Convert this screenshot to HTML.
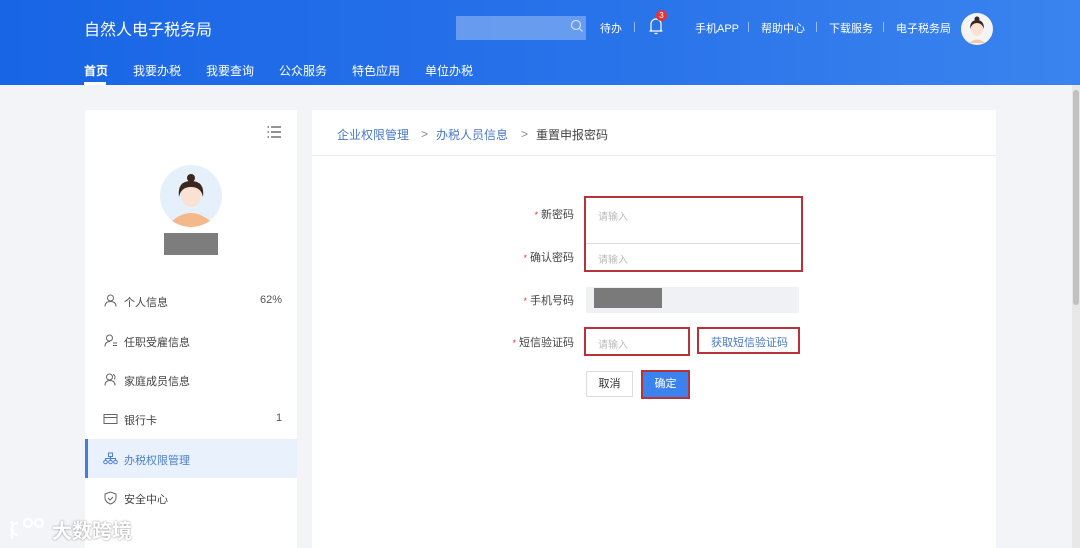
<!DOCTYPE html>
<html><head><meta charset="utf-8"><style>
*{margin:0;padding:0;box-sizing:border-box}
body{width:1080px;height:548px;overflow:hidden;background:#f2f4f7;font-family:"Liberation Sans","Noto Sans CJK SC",sans-serif;position:relative;color:#333}
.hd{position:absolute;left:0;top:0;width:1080px;height:85px;background:linear-gradient(90deg,#1865e6,#2a74ea 60%,#3a84ef)}
.t{position:absolute;color:#fff;white-space:nowrap}
.card{position:absolute;background:#fff}
.abs{position:absolute;white-space:nowrap}
.mi{position:absolute;left:104px;font-size:11px;color:#444;white-space:nowrap}
.lbl{position:absolute;font-size:11px;color:#444;text-align:right;width:80px;white-space:nowrap}
.lbl b{color:#e33;font-weight:normal;font-size:9px;margin-right:3px}
.ph{position:absolute;font-size:10px;color:#bbb}
.red{position:absolute;border:2px solid #b8323a}
</style></head><body>
<div class="hd"></div>
<div class="t" style="left:84px;top:16px;font-size:16px">自然人电子税务局</div>
<div class="t" style="left:84px;top:62px;font-size:12px;font-weight:bold">首页</div>
<div style="position:absolute;left:84px;top:82px;width:22px;height:3px;background:#fff"></div>
<div class="t" style="left:133px;top:62px;font-size:12px">我要办税</div>
<div class="t" style="left:206px;top:62px;font-size:12px">我要查询</div>
<div class="t" style="left:279px;top:62px;font-size:12px">公众服务</div>
<div class="t" style="left:352px;top:62px;font-size:12px">特色应用</div>
<div class="t" style="left:425px;top:62px;font-size:12px">单位办税</div>
<div style="position:absolute;left:456px;top:16px;width:130px;height:24px;background:rgba(255,255,255,.3)"></div>
<svg style="position:absolute;left:570px;top:19px" width="14" height="14"><circle cx="6" cy="6" r="4.5" fill="none" stroke="#cfe0ff" stroke-width="1.2"/><path d="M9.5 9.5L12.5 12.5" stroke="#cfe0ff" stroke-width="1.2"/></svg>
<div class="t" style="left:600px;top:20px;font-size:11px">待办</div>
<div style="position:absolute;left:634px;top:22px;width:1px;height:10px;background:rgba(255,255,255,.5)"></div>
<svg style="position:absolute;left:648px;top:16px" width="18" height="20"><path d="M3 15V8a5 5 0 0110 0v7M1.5 15h13M6.5 17.5h3" fill="none" stroke="#fff" stroke-width="1.2"/></svg>
<div style="position:absolute;left:656px;top:10px;width:11px;height:11px;border-radius:50%;background:#e0343b;color:#fff;font-size:8px;text-align:center;line-height:11px">3</div>
<div class="t" style="left:695px;top:20px;font-size:11px">手机APP</div>
<div style="position:absolute;left:748px;top:22px;width:1px;height:10px;background:rgba(255,255,255,.5)"></div>
<div class="t" style="left:761px;top:20px;font-size:11px">帮助中心</div>
<div style="position:absolute;left:816px;top:22px;width:1px;height:10px;background:rgba(255,255,255,.5)"></div>
<div class="t" style="left:829px;top:20px;font-size:11px">下载服务</div>
<div style="position:absolute;left:883px;top:22px;width:1px;height:10px;background:rgba(255,255,255,.5)"></div>
<div class="t" style="left:896px;top:20px;font-size:11px">电子税务局</div>
<svg style="position:absolute;left:961px;top:13px" width="32" height="32"><circle cx="16" cy="16" r="16" fill="#f4f4f4"/><path d="M8 30q8-7 16 0" fill="#f4c8a8"/><ellipse cx="16" cy="16" rx="6" ry="7" fill="#fbe2d2"/><path d="M9 16q0-9 7-9q7 0 7 9q-2-6-7-6q-5 0-7 6z" fill="#3a2520"/><circle cx="16" cy="6" r="2.5" fill="#3a2520"/></svg>

<div class="card" style="left:85px;top:110px;width:212px;height:438px"></div>
<svg style="position:absolute;left:266px;top:125px" width="16" height="14"><g stroke="#555" stroke-width="1.2"><path d="M5 2h10M5 7h10M5 12h10M1.5 2h1.5M1.5 7h1.5M1.5 12h1.5"/></g></svg>
<svg style="position:absolute;left:160px;top:165px" width="62" height="62"><circle cx="31" cy="31" r="31" fill="#e6f0fb"/><path d="M12 56q19-16 38 0q-9 6-19 6q-10 0-19-6z" fill="#f3b98a"/><ellipse cx="31" cy="30" rx="10" ry="12" fill="#fbe0d4"/><path d="M19 32q-2-16 12-16q14 0 12 16q-2-10-12-10q-10 0-12 10z" fill="#3b2620"/><circle cx="31" cy="13" r="4" fill="#3b2620"/></svg>
<div style="position:absolute;left:164px;top:233px;width:54px;height:22px;background:#7d7d7d"></div>
<svg style="position:absolute;left:104px;top:294px" width="13" height="13"><g fill="none" stroke="#666"><circle cx="6.5" cy="4" r="3"/><path d="M1 12.5q0-5 5.5-5q5.5 0 5.5 5"/></g></svg>
<div class="mi" style="left:124px;top:294px">个人信息</div><div class="abs" style="left:260px;top:294px;font-size:11px;color:#555">62%</div>
<svg style="position:absolute;left:104px;top:334px" width="14" height="13"><g fill="none" stroke="#666"><circle cx="5.5" cy="4" r="3"/><path d="M1 12.5q0-5 5-5M9 9h4M9 11.5h4"/></g></svg>
<div class="mi" style="left:124px;top:334px">任职受雇信息</div>
<svg style="position:absolute;left:104px;top:373px" width="14" height="13"><g fill="none" stroke="#666"><circle cx="5.5" cy="4" r="3"/><path d="M1 12.5q0-5 5-5q5 0 5 5M9 1.5q3 1 1.5 5"/></g></svg>
<div class="mi" style="left:124px;top:373px">家庭成员信息</div>
<svg style="position:absolute;left:103px;top:413px" width="15" height="12"><g fill="none" stroke="#666"><rect x="1" y="1.5" width="13" height="9"/><path d="M1 4.5h13"/></g></svg>
<div class="mi" style="left:124px;top:412px">银行卡</div><div class="abs" style="left:276px;top:412px;font-size:11px;color:#555">1</div>
<div style="position:absolute;left:85px;top:439px;width:212px;height:39px;background:#e9f2fc"></div>
<div style="position:absolute;left:85px;top:439px;width:3px;height:39px;background:#3f7fd8"></div>
<svg style="position:absolute;left:103px;top:452px" width="15" height="13"><g fill="none" stroke="#4b7fd0"><rect x="5.5" y="1" width="4" height="3.5"/><circle cx="2.5" cy="10" r="1.8"/><circle cx="7.5" cy="10" r="1.8"/><circle cx="12.5" cy="10" r="1.8"/><path d="M7.5 4.5v3.5M2.5 8v-1.5h10V8"/></g></svg>
<div class="mi" style="left:124px;top:452px;color:#4b7fd0">办税权限管理</div>
<svg style="position:absolute;left:104px;top:491px" width="13" height="14"><g fill="none" stroke="#666"><path d="M6.5 1L12 3v4q0 4-5.5 6q-5.5-2-5.5-6V3z"/><path d="M4 7l2 2 3-3"/></g></svg>
<div class="mi" style="left:124px;top:491px">安全中心</div>

<div class="card" style="left:312px;top:110px;width:684px;height:438px"></div>
<div style="position:absolute;left:312px;top:155px;width:684px;height:1px;background:#eceef2"></div>
<div class="abs" style="left:337px;top:126px;font-size:12px;color:#4a78c8">企业权限管理</div>
<div class="abs" style="left:421px;top:127px;font-size:12px;color:#888">&gt;</div>
<div class="abs" style="left:436px;top:126px;font-size:12px;color:#4a78c8">办税人员信息</div>
<div class="abs" style="left:521px;top:127px;font-size:12px;color:#888">&gt;</div>
<div class="abs" style="left:536px;top:126px;font-size:12px;color:#444">重置申报密码</div>

<div class="lbl" style="left:494px;top:206px"><b>*</b>新密码</div>
<div class="lbl" style="left:494px;top:249px"><b>*</b>确认密码</div>
<div class="lbl" style="left:494px;top:292px"><b>*</b>手机号码</div>
<div class="lbl" style="left:494px;top:334px"><b>*</b>短信验证码</div>
<div style="position:absolute;left:586px;top:243px;width:214px;height:1px;background:#ddd"></div>
<div class="red" style="left:584px;top:196px;width:219px;height:76px"></div>
<div class="ph" style="left:598px;top:208px">请输入</div>
<div class="ph" style="left:598px;top:251px">请输入</div>
<div style="position:absolute;left:586px;top:287px;width:213px;height:26px;background:#f0f1f4"></div>
<div style="position:absolute;left:594px;top:288px;width:68px;height:20px;background:#7a7a7a"></div>
<div class="red" style="left:584px;top:327px;width:106px;height:29px"></div>
<div class="ph" style="left:598px;top:336px">请输入</div>
<div class="red" style="left:697px;top:327px;width:103px;height:27px"></div>
<div class="abs" style="left:711px;top:334px;font-size:11px;color:#4a78c8">获取短信验证码</div>
<div style="position:absolute;left:586px;top:371px;width:47px;height:26px;border:1px solid #ddd;background:#fff;font-size:11px;text-align:center;line-height:24px;color:#333">取消</div>
<div style="position:absolute;left:641px;top:370px;width:49px;height:29px;border:2px solid #b8323a;background:#3c82ee;font-size:11px;text-align:center;line-height:25px;color:#fff">确定</div>

<div style="position:absolute;left:1072px;top:85px;width:8px;height:463px;background:#e8e8e8"></div>
<div style="position:absolute;left:1073px;top:90px;width:6px;height:215px;background:#c1c1c1;border-radius:3px"></div>
<svg style="position:absolute;left:8px;top:515px" width="42" height="28"><g fill="none" stroke="#fff" stroke-width="2.2"><path d="M4 6v18M10 20a6 6 0 010-12"/><circle cx="20" cy="8" r="4"/><circle cx="31" cy="8" r="4"/></g></svg>
<div class="abs" style="left:52px;top:515px;font-size:20px;color:#fff;font-weight:bold;text-shadow:0 0 2px rgba(0,0,0,.45)">大数跨境</div>
</body></html>
